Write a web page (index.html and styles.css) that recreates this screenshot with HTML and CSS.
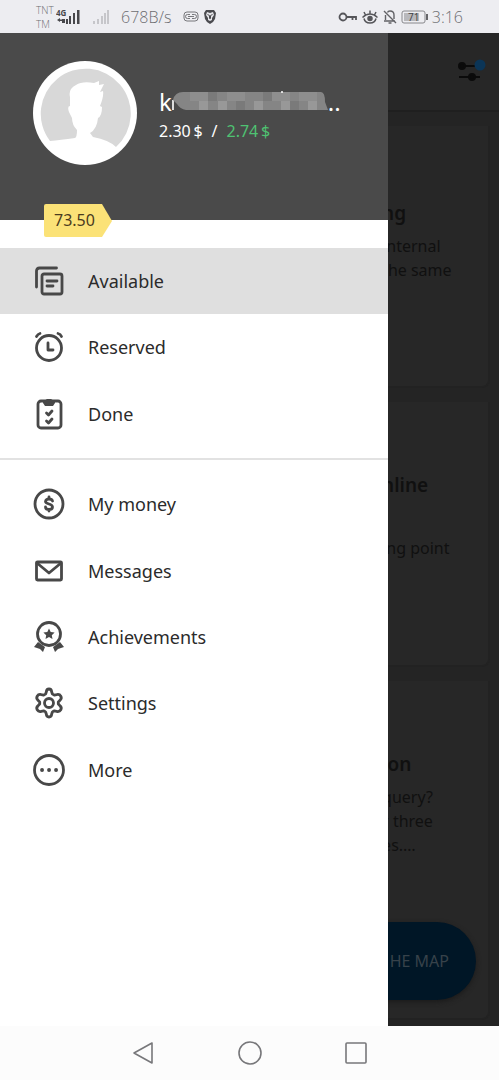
FILE: index.html
```html
<!DOCTYPE html>
<html lang="en">
<head>
<meta charset="utf-8">
<meta name="viewport" content="width=device-width, initial-scale=1">
<title>Tasks</title>
<link rel="stylesheet" href="styles.css">
</head>
<body>
<div class="screen">
  <header class="status">
    <div class="status-left">
      <div class="carrier"><span>TNT</span><span>TM</span></div>
      <svg width="25" height="18" viewBox="0 0 25 18" fill="#47474b"><text class="net" x="0" y="8">4G</text><path d="M1 12l3-2v1.500h2v1.500H4v1zM6 11h3v4H6zM10 11h2v5h-2zM13 8h2v8h-2zM17 5h2v11h-2zM21 2h2.500v14H21z"/></svg>
      <svg width="18" height="18" viewBox="0 0 18 18" fill="#c6c6ca"><path d="M1 13h2v3H1zM5 11h2v5H5zM9 8h2v8H9zM12 5h2v11h-2zM15 2h2v14h-2z"/></svg>
      <span class="speed">678B/s</span>
      <svg class="vpn" width="16" height="12" viewBox="0 0 16 12" fill="none" stroke="#77777b"><rect x="1" y="1" width="14" height="9" rx="3"/><path d="M7 3.500H4.500a1 1 0 0 0 0 4H7M9 3.500h2.500a1 1 0 0 1 0 4H9M5 5.500h6"/></svg>
      <svg width="14" height="16" viewBox="0 0 14 16"><path d="M3 1h8l2 3-1 6-2 3-3 2-3-2-2-3-1-6z" fill="#4b4b4f"/><path d="M4 3l3 1 3-1 1 3-2 3 0 2-2 1-2-1 0-2-2-3z" fill="#e4e4e8"/><path d="M4.500 5.500l2 1v3h1v-3l2-1" fill="none" stroke="#4b4b4f"/></svg>
    </div>
    <div class="status-right">
      <svg width="20" height="14" viewBox="0 0 20 14" fill="none" stroke="#555559" stroke-width="1.800"><circle cx="5" cy="7" r="3.500"/><path d="M8.500 7H18v3M14.500 7v3"/></svg>
      <svg width="18" height="16" viewBox="0 0 18 16" fill="none" stroke="#555559" stroke-width="1.500"><path d="M1.500 8.500Q9 1.500 16.500 8.500M3 9.500Q4 14 9 14t6-4.500M9 5V1.500M4.500 6L3 3M13.500 6L15 3"/><circle cx="9" cy="9.500" r="2" fill="#555559"/></svg>
      <svg width="16" height="16" viewBox="0 0 16 16" fill="none" stroke="#626266" stroke-width="1.400"><path d="M2 12h11M3.500 11V6M5.500 3.500Q6 2 8 2q4 0 4 4v4M6.500 14h3M2 2l12 12"/></svg>
      <svg width="28" height="14" viewBox="0 0 28 14"><rect x="1" y="1" width="23" height="12" rx="2" fill="none" stroke="#88888c"/><rect x="3" y="3" width="15" height="8" fill="#b8b8bc"/><path d="M26 4v6" stroke="#66666a" stroke-width="2"/><text class="charge" x="7" y="11">71</text></svg>
      <time class="clock">3:16</time>
    </div>
  </header>

  <main class="stage">
    <aside class="drawer">
      <section class="profile">
        <svg class="avatar" viewBox="0 0 104 104" role="img" aria-label="Profile photo"><circle cx="52" cy="52" r="52" fill="#fff"/><path d="M17 80A45 45 0 1 1 83 86Q76 79 60 76L57 72Q64 68 65 57Q69 55 69 46L67 45Q71 35 70 30L67 31L71 23L66 24L66 20L61 22Q49 20 43 24Q35 28 37 36L37 45Q34 45 36 51L39 57Q39 64 44 69Q44 76 42 77Q27 79 17 80z" fill="#d8d8d8"/></svg>
        <div class="identity">
          <div class="name"><span>k</span><svg class="mask" viewBox="0 0 156 20" aria-hidden="true"><path d="M0 19V9h2v10z" fill="#ddd"/><path d="M1 9Q3 1 11 1H149Q153 1 153 11L156 19H14Q8 18 5 13z" fill="#858585"/><path d="M18 1h18v9H18zM55 1h18v9H55zM100 1h18v9h-18zM127 1h18v9h-18z" fill="#8e8e8e"/><path d="M27 10h9v9h-9zM46 10h9v9h-9zM82 10h9v9h-9zM109 10h9v9h-9zM136 10h9v9h-9z" fill="#989898"/><path d="M36 1h9v9h-9zM64 10h9v9h-9zM91 1h9v9h-9zM118 10h9v9h-9z" fill="#7a7a7a"/><circle cx="110" cy="1" r="1" fill="#fff"/></svg><span>..</span></div>
          <div class="funds"><span>2.30&#8201;$</span><span>/</span><span class="pending">2.74&#8201;$</span></div>
        </div>
        <div class="rating"><svg viewBox="0 0 68 33" aria-hidden="true"><path d="M2 0H58L68 17 58 33H2Q0 33 0 31V2Q0 0 2 0z" fill="#fbe277"/></svg><span>73.50</span></div>
      </section>
      <nav class="menu">
        <div class="group tasks">
          <a class="item active" href="#available"><svg viewBox="0 0 32 32"><path d="M3.500 22V6q0-3 3-3h17"/><rect x="9" y="9" width="20" height="20" rx="2"/><path d="M14 16h10M14 21h6"/></svg>Available</a>
          <a class="item" href="#reserved"><svg viewBox="0 0 32 32"><circle cx="16" cy="17" r="12.500"/><path d="M15 12v7h5M3.500 5.500Q5 3 7 2.500M25 2.500Q27.500 3 28.500 5.500"/></svg>Reserved</a>
          <a class="item" href="#done"><svg viewBox="0 0 32 32"><rect x="5" y="3" width="23" height="27" rx="3"/><path d="M10 3Q13 2 14 1h4q1 1 4 2v2l-2 3h-8l-2-3z" fill="#484848" stroke="none"/><path d="M13.500 15l2 2 3.500-4M13.500 23l2 2 3.500-4"/></svg>Done</a>
        </div>
        <div class="group account">
          <a class="item" href="#money"><svg viewBox="0 0 32 32"><circle cx="16" cy="16" r="14"/><path d="M19.500 13Q19 11 16 11t-3.500 2.500Q12.500 15 16 16t3.500 3Q19.500 21.500 16 21.500T12.500 19M16 9v2M16 22v1"/></svg>My money</a>
          <a class="item" href="#messages"><svg viewBox="0 0 32 32"><rect x="3.500" y="7" width="25" height="18" rx="1"/><path d="M4 8l12 10L28 8"/></svg>Messages</a>
          <a class="item" href="#achievements"><svg viewBox="0 0 32 32"><circle cx="16" cy="13" r="11.500"/><path d="M16 7.500l1.700 3.500 3.900.500-2.800 2.700.700 3.800-3.500-1.900-3.500 1.900.700-3.800-2.800-2.700 3.900-.500zM5 21l7 5-2 5-3-3-6-2zM27 21l-7 5 2 5 3-3 6-2z" fill="#484848" stroke="none"/></svg>Achievements</a>
          <a class="item" href="#settings"><svg viewBox="0 0 32 32"><path d="M13.300 5Q13.500 2 16 2t2.700 3l.7 2q1 .8 2 1.100l2.300-.5q2.800-.7 4.100 1.600t-1 4.200l-1.500 1.500v2.200l1.500 1.500q2.300 1.900 1 4.200t-4.100 1.600l-2.300-.5q-1 .300-2 1.100l-.7 2q-.200 3-2.700 3t-2.700-3l-.7-2q-1-.8-2-1.100l-2.300.5q-2.800.7-4.100-1.600t1-4.200l1.500-1.500v-2.200l-1.500-1.500q-2.300-1.900-1-4.200t4.100-1.600l2.300.5q1-.300 2-1.100z"/><circle cx="16" cy="16" r="4.500"/></svg>Settings</a>
          <a class="item" href="#more"><svg viewBox="0 0 32 32"><circle cx="16" cy="16" r="14.500"/><path d="M9 16h.1M16 16h.1M23 16h.1" stroke-width="3.800"/></svg>More</a>
        </div>
      </nav>
    </aside>

    <div class="page">
      <div class="appbar"><button class="filter" aria-label="Filters"><svg width="30" height="24" viewBox="0 0 30 24" fill="#0b0b0b" stroke="#0b0b0b" stroke-width="2"><path d="M5 8h18M2 19h21"/><circle cx="5" cy="8" r="3"/><circle cx="15" cy="19" r="3"/><circle cx="23" cy="7" r="5.500" fill="#0b3557" stroke="none"/></svg></button></div>
      <article class="card"><h2>ng</h2><p>internal<br>the same</p></article>
      <article class="card roomy"><h2>nline</h2><p>ing point</p></article>
      <article class="card tall"><h2>ion</h2><p>query?<br>r three<br>es.…</p><button class="map">HE MAP</button></article>
    </div>
  </main>

  <footer class="navbar">
    <button aria-label="Back"><svg viewBox="0 0 24 24"><path d="M20 2v20L2 12z"/></svg></button>
    <button aria-label="Home"><svg viewBox="0 0 24 24"><circle cx="12" cy="12" r="11"/></svg></button>
    <button aria-label="Recent apps"><svg viewBox="0 0 24 24"><rect x="2" y="2" width="20" height="20" rx="1"/></svg></button>
  </footer>
</div>
</body>
</html>
```
FILE: styles.css
```css
* { box-sizing: border-box; }
body { margin: 0; background: #fff; color: #2b2b2b; font-family: "Noto Sans", "Open Sans", sans-serif; font-size: 18px; }
button { border: 0; padding: 0; background: none; font: inherit; }
svg { display: block; flex: none; }
.screen { min-height: 100vh; display: flex; flex-direction: column; }

.status { height: 33px; display: flex; justify-content: space-between; align-items: center; padding: 0 36px; background: #ededf1; color: #6e6e72; font-family: "Open Sans", "Noto Sans", sans-serif; font-weight: 300; }
.status-left, .status-right { display: flex; align-items: center; }
.status-left svg { margin-right: 11px; }
.status-left .vpn { margin-right: 4px; }
.status-right { gap: 3px; }
.carrier { display: flex; flex-direction: column; width: 20px; font-size: 10px; line-height: 14px; }
.speed { width: 52px; margin-right: 10px; font-size: 16px; white-space: nowrap; }
.clock { font-size: 16px; line-height: 24px; }
.net { font: bold 8px "Open Sans", sans-serif; }
.charge { font: 10px "Open Sans", sans-serif; fill: #3f3f43; }

.stage { flex: 1; display: grid; grid-template-columns: 7fr 2fr; background: #242424; }
.drawer { position: relative; z-index: 1; background: #fff; min-width: 0; }
.profile { position: relative; display: flex; gap: 22px; height: 187px; padding: 28px 33px; background: #4a4a4a; color: #fff; }
.avatar { width: 104px; height: 104px; }
.identity { padding-top: 24px; }
.name { display: flex; align-items: center; height: 32px; font-size: 24px; }
.mask { width: 156px; height: 20px; }
.funds { display: flex; gap: 9px; font-size: 16px; line-height: 28px; white-space: nowrap; }
.pending { color: #4fc272; }
.rating { position: absolute; left: 44px; bottom: -17px; display: grid; align-items: center; color: #4a3b1e; font-size: 16px; line-height: 33px; }
.rating svg, .rating span { grid-area: 1 / 1; }
.rating svg { width: 68px; height: 33px; }
.rating span { padding-left: 10px; }

.menu { padding-top: 28px; }
.group { display: grid; grid-auto-rows: 1fr; }
.tasks { height: 199px; }
.account { height: 345px; margin-top: 11px; padding-top: 11px; border-top: 2px solid #e2e2e2; }
.item { display: flex; align-items: center; gap: 23px; padding: 0 33px; color: #2b2b2b; text-decoration: none; }
.item svg { width: 32px; height: 32px; fill: none; stroke: #484848; stroke-width: 2.8; stroke-linecap: round; stroke-linejoin: round; }
.active { background: #dfdfdf; }

.page { display: flex; flex-direction: column; gap: 14px; margin-left: -12px; padding-bottom: 6px; color: #101010; overflow: hidden; }
.appbar { height: 79px; display: flex; justify-content: flex-end; padding: 25px 12px 0; background: #272727; border-bottom: 2px solid #1f1f1f; }
.filter { height: 24px; }
.card { min-height: 262px; display: flex; flex-direction: column; margin-right: 9px; padding: 74px 0 0 6px; background: #272727; border: solid #222; border-width: 0 2px 2px 0; border-radius: 0 0 8px 0; white-space: nowrap; }
.card h2 { margin: 0 0 8px; font-size: 19px; font-weight: 600; line-height: 26px; }
.card p { margin: 0; font-size: 16px; line-height: 24px; }
.card.roomy { min-height: 265px; padding-top: 70px; }
.roomy h2 { margin-bottom: 38px; }
.card.tall { flex: 1; padding-top: 70px; }
.map { height: 78px; margin: auto 12px 18px -80px; padding-right: 27px; border-radius: 39px; background: #001626; color: #37424a; font-size: 16px; text-align: right; box-shadow: 0 2px 5px #1b1b1b; }

.navbar { height: 54px; display: flex; justify-content: center; align-items: center; gap: 82px; background: #fcfcfc; }
.navbar svg { width: 24px; height: 24px; fill: none; stroke: #77777a; stroke-width: 1.6; stroke-linejoin: round; }
```
